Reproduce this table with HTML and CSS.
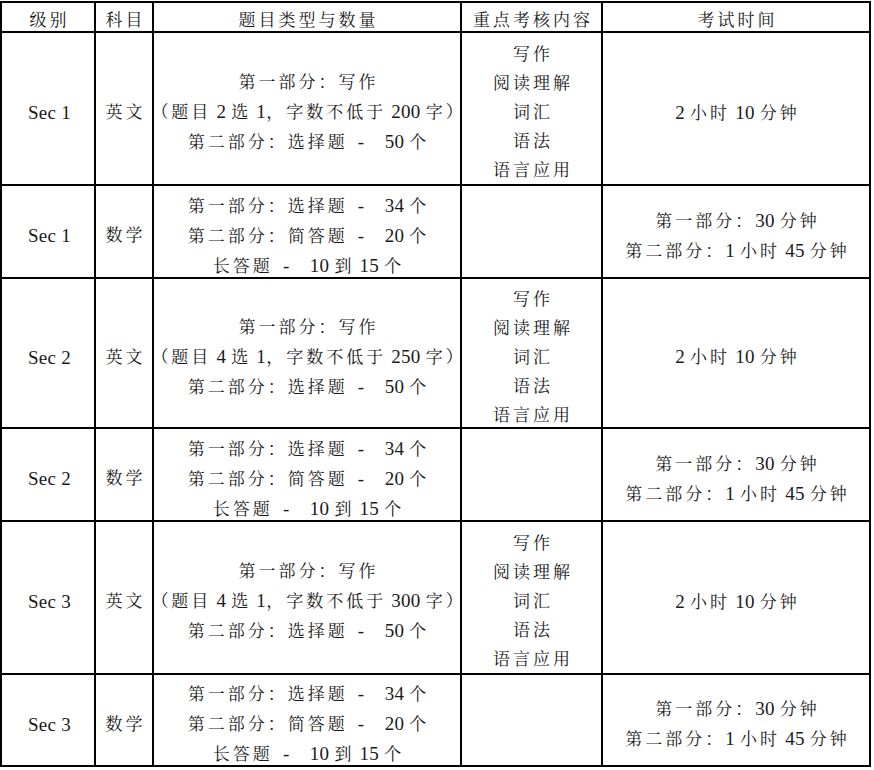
FILE: index.html
```html
<!DOCTYPE html>
<html lang="zh-CN">
<head>
<meta charset="utf-8">
<title>考试安排</title>
<link rel="stylesheet" href="styles.css">
</head>
<body>
<div class="table">
  <div class="cell head">级别</div>
  <div class="cell head">科目</div>
  <div class="cell head">题目类型与数量</div>
  <div class="cell head">重点考核内容</div>
  <div class="cell head">考试时间</div>

  <div class="cell"><span class="n">Sec 1</span></div>
  <div class="cell">英文</div>
  <div class="cell">
    <div>第一部分：写作</div>
    <div>（题目<span class="n"> 2 </span>选<span class="n"> 1</span>，字数不低于<span class="n"> 200 </span>字）</div>
    <div>第二部分：选择题<span class="n">&nbsp;&nbsp;-&nbsp;&nbsp;&nbsp;&nbsp;50 </span>个</div>
  </div>
  <div class="cell">
    <div>写作</div><div>阅读理解</div><div>词汇</div><div>语法</div><div>语言应用</div>
  </div>
  <div class="cell"><div><span class="n">2 </span>小时<span class="n"> 10 </span>分钟</div></div>

  <div class="cell"><span class="n">Sec 1</span></div>
  <div class="cell">数学</div>
  <div class="cell">
    <div>第一部分：选择题<span class="n">&nbsp;&nbsp;-&nbsp;&nbsp;&nbsp;&nbsp;34 </span>个</div>
    <div>第二部分：简答题<span class="n">&nbsp;&nbsp;-&nbsp;&nbsp;&nbsp;&nbsp;20 </span>个</div>
    <div>长答题<span class="n">&nbsp;&nbsp;-&nbsp;&nbsp;&nbsp;&nbsp;10 </span>到<span class="n"> 15 </span>个</div>
  </div>
  <div class="cell"></div>
  <div class="cell">
    <div>第一部分：<span class="n">30 </span>分钟</div>
    <div>第二部分：<span class="n">1 </span>小时<span class="n"> 45 </span>分钟</div>
  </div>

  <div class="cell"><span class="n">Sec 2</span></div>
  <div class="cell">英文</div>
  <div class="cell">
    <div>第一部分：写作</div>
    <div>（题目<span class="n"> 4 </span>选<span class="n"> 1</span>，字数不低于<span class="n"> 250 </span>字）</div>
    <div>第二部分：选择题<span class="n">&nbsp;&nbsp;-&nbsp;&nbsp;&nbsp;&nbsp;50 </span>个</div>
  </div>
  <div class="cell">
    <div>写作</div><div>阅读理解</div><div>词汇</div><div>语法</div><div>语言应用</div>
  </div>
  <div class="cell"><div><span class="n">2 </span>小时<span class="n"> 10 </span>分钟</div></div>

  <div class="cell"><span class="n">Sec 2</span></div>
  <div class="cell">数学</div>
  <div class="cell">
    <div>第一部分：选择题<span class="n">&nbsp;&nbsp;-&nbsp;&nbsp;&nbsp;&nbsp;34 </span>个</div>
    <div>第二部分：简答题<span class="n">&nbsp;&nbsp;-&nbsp;&nbsp;&nbsp;&nbsp;20 </span>个</div>
    <div>长答题<span class="n">&nbsp;&nbsp;-&nbsp;&nbsp;&nbsp;&nbsp;10 </span>到<span class="n"> 15 </span>个</div>
  </div>
  <div class="cell"></div>
  <div class="cell">
    <div>第一部分：<span class="n">30 </span>分钟</div>
    <div>第二部分：<span class="n">1 </span>小时<span class="n"> 45 </span>分钟</div>
  </div>

  <div class="cell"><span class="n">Sec 3</span></div>
  <div class="cell">英文</div>
  <div class="cell">
    <div>第一部分：写作</div>
    <div>（题目<span class="n"> 4 </span>选<span class="n"> 1</span>，字数不低于<span class="n"> 300 </span>字）</div>
    <div>第二部分：选择题<span class="n">&nbsp;&nbsp;-&nbsp;&nbsp;&nbsp;&nbsp;50 </span>个</div>
  </div>
  <div class="cell">
    <div>写作</div><div>阅读理解</div><div>词汇</div><div>语法</div><div>语言应用</div>
  </div>
  <div class="cell"><div><span class="n">2 </span>小时<span class="n"> 10 </span>分钟</div></div>

  <div class="cell"><span class="n">Sec 3</span></div>
  <div class="cell">数学</div>
  <div class="cell">
    <div>第一部分：选择题<span class="n">&nbsp;&nbsp;-&nbsp;&nbsp;&nbsp;&nbsp;34 </span>个</div>
    <div>第二部分：简答题<span class="n">&nbsp;&nbsp;-&nbsp;&nbsp;&nbsp;&nbsp;20 </span>个</div>
    <div>长答题<span class="n">&nbsp;&nbsp;-&nbsp;&nbsp;&nbsp;&nbsp;10 </span>到<span class="n"> 15 </span>个</div>
  </div>
  <div class="cell"></div>
  <div class="cell">
    <div>第一部分：<span class="n">30 </span>分钟</div>
    <div>第二部分：<span class="n">1 </span>小时<span class="n"> 45 </span>分钟</div>
  </div>
</div>
</body>
</html>
```

FILE: styles.css
```css
html, body {
  margin: 0;
  padding: 0;
  background: #ffffff;
}

body {
  padding-top: 1px;
  font-family: "Liberation Serif", "Noto Serif CJK SC", "Noto Sans CJK SC", serif;
  font-size: 17px;
  letter-spacing: 3px;
  color: #1a1a1a;
}

.table {
  display: grid;
  grid-template-columns: 94px 58px 308px 141px 268px;
  grid-template-rows: 30px 153px 93px 150px 93px 153px 92px;
  width: max-content;
  border-left: 2px solid #000;
  border-top: 2px solid #000;
}

.cell {
  box-sizing: border-box;
  border-right: 2px solid #000;
  border-bottom: 2px solid #000;
  display: flex;
  flex-direction: column;
  justify-content: center;
  align-items: center;
  padding-top: 8px;
  padding-left: 3px;
  line-height: 29px;
  text-align: center;
  white-space: nowrap;
  min-width: 0;
}

.head {
  padding-top: 6px;
}

.n {
  font-family: "Liberation Serif", serif;
  font-size: 19px;
  letter-spacing: 0.3px;
}
```
